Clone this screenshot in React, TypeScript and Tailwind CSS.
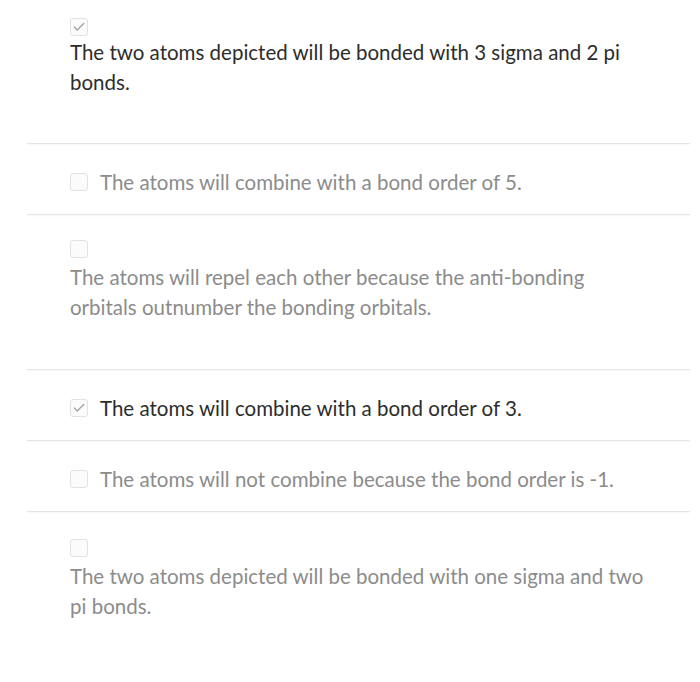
import { Check } from 'lucide-react'

type Answer = {
  text: string
  checked: boolean
  stacked: boolean
}

const answers: Answer[] = [
  { text: 'The two atoms depicted will be bonded with 3 sigma and 2 pi bonds.', checked: true, stacked: true },
  { text: 'The atoms will combine with a bond order of 5.', checked: false, stacked: false },
  { text: 'The atoms will repel each other because the anti-bonding orbitals outnumber the bonding orbitals.', checked: false, stacked: true },
  { text: 'The atoms will combine with a bond order of 3.', checked: true, stacked: false },
  { text: 'The atoms will not combine because the bond order is -1.', checked: false, stacked: false },
  { text: 'The two atoms depicted will be bonded with one sigma and two pi bonds.', checked: false, stacked: true },
]

function Box({ checked }: { checked: boolean }) {
  return (
    <span className="flex h-[18px] w-[18px] shrink-0 items-center justify-center rounded-[3px] border border-[#e2e2e2] bg-[#fbfbfb]">
      {checked && <Check size={14} strokeWidth={2.4} className="text-[#a3a3a3]" />}
    </span>
  )
}

const stackedPad = [
  'pt-[18px] pb-[46px]',
  '',
  'pt-[25px] pb-[47px]',
  '',
  '',
  'pt-[27px] pb-[47px]',
]

export default function App() {
  return (
    <div className="min-h-[682px] bg-white font-['Lato',sans-serif] text-[20.5px] leading-[30px]">
      {answers.map((a, i) => (
        <div key={i}>
          {i > 0 && (
            <div className="ml-[27px] mr-[10px] h-px bg-[#e6e6e6] shadow-[0_1px_2px_rgba(0,0,0,0.06)]" />
          )}
          {a.stacked ? (
            <div className={`w-[652px] pl-[70px] ${stackedPad[i]}`}>
              <Box checked={a.checked} />
              <p
                className={
                  (i === 0 ? 'mt-[1px] ' : 'mt-[4px] ') +
                  (a.checked ? 'text-[#2d2d2d]' : 'text-[#8c8c8c]')
                }
              >
                {a.text}
              </p>
            </div>
          ) : (
            <div className="flex h-[70px] items-center gap-[12px] pl-[70px] pt-[6px]">
              <Box checked={a.checked} />
              <p className={a.checked ? 'text-[#2d2d2d]' : 'text-[#8c8c8c]'}>{a.text}</p>
            </div>
          )}
        </div>
      ))}
    </div>
  )
}
